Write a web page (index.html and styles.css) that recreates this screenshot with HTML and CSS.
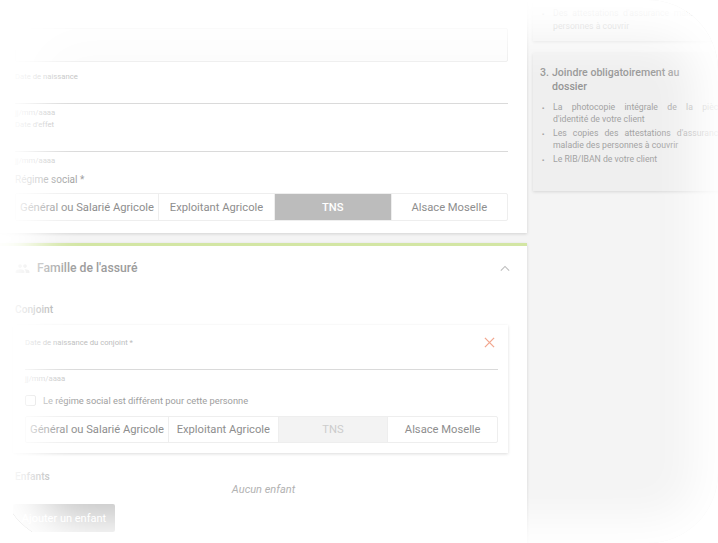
FILE: index.html
```html
<!DOCTYPE html>
<html lang="fr">
<head>
<meta charset="utf-8">
<title>Souscription</title>
<link rel="stylesheet" href="styles.css">
</head>
<body>
<div class="layout">
  <main class="main">
    <section class="card card-assure">
      <div class="top-box"></div>
      <div class="field">
        <div class="field-label">Date de naissance</div>
        <div class="field-input"></div>
        <div class="field-help">jj/mm/aaaa</div>
      </div>
      <div class="field field-next">
        <div class="field-label">Date d'effet</div>
        <div class="field-input"></div>
        <div class="field-help">jj/mm/aaaa</div>
      </div>
      <div class="group-label">Régime social *</div>
      <div class="segments">
        <div class="seg seg-first">Général ou Salarié Agricole</div>
        <div class="seg seg-second">Exploitant Agricole</div>
        <div class="seg seg-active">TNS</div>
        <div class="seg">Alsace Moselle</div>
      </div>
    </section>

    <section class="card card-famille">
      <header class="card-head">
        <svg class="ico-people" viewBox="0 0 24 24" width="15" height="15"><path fill="#cfcfcf" d="M16 11c1.66 0 2.99-1.34 2.99-3S17.66 5 16 5c-1.66 0-3 1.34-3 3s1.34 3 3 3zm-8 0c1.66 0 2.99-1.34 2.99-3S9.66 5 8 5C6.34 5 5 6.34 5 8s1.34 3 3 3zm0 2c-2.33 0-7 1.17-7 3.5V19h14v-2.5c0-2.33-4.67-3.5-7-3.5zm8 0c-.29 0-.62.02-.97.05 1.16.84 1.97 1.97 1.97 3.450V19h6v-2.5c0-2.33-4.67-3.5-7-3.5z"/></svg>
        <h2 class="card-title">Famille de l'assuré</h2>
        <svg class="ico-chevron" viewBox="0 0 12 8" width="10" height="7"><path d="M1 6.5 6 1.5l5 5" fill="none" stroke="#bdbdbd" stroke-width="1.3"/></svg>
      </header>
      <h3 class="sub">Conjoint</h3>
      <div class="inner-card">
        <div class="field field-removable">
          <div class="field-label">Date de naissance du conjoint *</div>
          <div class="field-input"></div>
          <div class="field-help">jj/mm/aaaa</div>
          <svg class="ico-close" viewBox="0 0 12 12" width="11" height="11"><path d="M1 1l10 10M11 1 1 11" stroke="#f2a68e" stroke-width="1.4" fill="none"/></svg>
        </div>
        <label class="check"><span class="box"></span>Le régime social est différent pour cette personne</label>
        <div class="segments segments-inner">
          <div class="seg seg-first">Général ou Salarié Agricole</div>
          <div class="seg">Exploitant Agricole</div>
          <div class="seg seg-disabled">TNS</div>
          <div class="seg">Alsace Moselle</div>
        </div>
      </div>
      <h3 class="sub sub-enfants">Enfants</h3>
      <p class="empty">Aucun enfant</p>
      <button class="btn">Ajouter un enfant</button>
    </section>
  </main>

  <aside class="side">
    <div class="side-card side-prev">
      <ul class="side-list">
        <li>Des attestations d'assurance maladie des personnes à couvrir</li>
      </ul>
    </div>
    <div class="side-card">
      <h4 class="side-title"><span class="num">3.</span><span>Joindre obligatoirement au dossier</span></h4>
      <ul class="side-list">
        <li>La photocopie intégrale de la pièce d'identité de votre client</li>
        <li>Les copies des attestations d'assurance maladie des personnes à couvrir</li>
        <li>Le RIB/IBAN de votre client</li>
      </ul>
    </div>
  </aside>
</div>
<div class="vignette"></div>
</body>
</html>
```

FILE: styles.css
```css
html, body {
  margin: 0;
  padding: 0;
}
body {
  width: 718px;
  height: 543px;
  overflow: hidden;
  background: #f4f4f4;
  font-family: Roboto, "Liberation Sans", sans-serif;
  color: #9a9a9a;
  position: relative;
}
.layout {
  display: grid;
  grid-template-columns: 527px 200px;
  column-gap: 6px;
  align-items: start;
}
.card {
  background: #fff;
  box-shadow: 0 1px 3px rgba(0, 0, 0, 0.14);
}
.card-assure {
  padding: 28px 19px 12px 15px;
}
.top-box {
  height: 32px;
  border: 1px solid #ededed;
  background: #fcfcfc;
  border-radius: 2px;
}
.field {
  margin-top: 10px;
  position: relative;
}
.field-next {
  margin-top: 2px;
}
.field-label {
  font-size: 7.7px;
  line-height: 10px;
  color: #bdbdbd;
}
.field-input {
  height: 21px;
  border-bottom: 1px solid #dadada;
}
.field-help {
  font-size: 7.7px;
  line-height: 10px;
  margin-top: 4px;
  color: #c4c4c4;
}
.group-label {
  margin-top: 7px;
  font-size: 10px;
  line-height: 14px;
  color: #a0a0a0;
}
.segments {
  margin-top: 6px;
  height: 28px;
  display: flex;
  border: 1px solid #eeeeee;
  box-sizing: border-box;
  border-radius: 2px;
}
.seg {
  flex: 1 1 0;
  display: flex;
  align-items: center;
  justify-content: center;
  font-size: 11.2px;
  color: #8e8e8e;
  white-space: nowrap;
  border-left: 1px solid #eeeeee;
}
.seg-first {
  flex: 0 0 142px;
  border-left: none;
}
.seg-second {
  flex: 0 0 115px;
}
.seg-active {
  background: #bcbcbc;
  color: #fff;
  font-weight: 500;
}
.card-famille {
  margin-top: 10px;
  border-top: 3px solid #d3e6a4;
  padding-bottom: 20px;
}
.card-head {
  height: 44px;
  display: flex;
  align-items: center;
  padding: 0 17px 0 15px;
  gap: 7px;
}
.card-title {
  margin: 0;
  flex: 1;
  font-size: 12.2px;
  font-weight: 500;
  color: #9c9c9c;
}
.sub {
  margin: 12px 0 0 15px;
  font-size: 10.2px;
  line-height: 16px;
  font-weight: 500;
  color: #a3a3a3;
}
.inner-card {
  margin: 7px 19px 0 13px;
  padding: 13px 10px 10px 12px;
  background: #fff;
  box-shadow: 0 1px 3px rgba(0, 0, 0, 0.14);
}
.field-removable {
  margin-top: 0;
}
.ico-close {
  position: absolute;
  right: 3px;
  top: -1px;
}
.check {
  margin-top: 9px;
  display: flex;
  align-items: center;
  gap: 7px;
  height: 14px;
  font-size: 9.3px;
  color: #9e9e9e;
}
.box {
  width: 11px;
  height: 11px;
  box-sizing: border-box;
  border: 1px solid #cfcfcf;
  border-radius: 2px;
}
.segments-inner {
  margin-top: 9px;
  height: 27px;
}
.seg-disabled {
  background: #f3f3f3;
  color: #cccccc;
}
.sub-enfants {
  margin-top: 17px;
  line-height: 14px;
}
.empty {
  margin: 0;
  text-align: center;
  font-size: 11px;
  line-height: 12px;
  font-style: italic;
  color: #acacac;
}
.btn {
  margin: 8px 0 0 13px;
  width: 102px;
  height: 28px;
  border: none;
  border-radius: 2px;
  background: #c2c2c2;
  color: #fff;
  font-family: inherit;
  font-size: 11px;
  padding: 0;
}
.side-card {
  background: #efefef;
  box-shadow: 0 1px 3px rgba(0, 0, 0, 0.12);
  padding: 13px 10px 22px 7px;
}
.side-prev {
  padding: 7px 10px 8px 7px;
  margin-bottom: 12px;
}
.side-title {
  margin: 0;
  display: flex;
  gap: 3px;
  font-size: 10.6px;
  line-height: 14px;
  font-weight: 500;
  color: #959595;
  padding-right: 20px;
}
.side-list {
  list-style: none;
  margin: 8px 0 0;
  padding: 0;
}
.side-prev .side-list {
  margin-top: 0;
}
.side-list li {
  position: relative;
  padding-left: 13px;
  font-size: 8.7px;
  line-height: 11.5px;
  text-align: justify;
  color: #a3a3a3;
  margin-bottom: 3px;
}
.side-prev .side-list li {
  line-height: 13px;
  margin-bottom: 0;
}
.side-list li::before {
  content: "▪";
  position: absolute;
  left: 2px;
  top: 0;
  font-size: 6px;
}
.vignette {
  position: absolute;
  inset: 0;
  pointer-events: none;
  border-radius: 70px;
  box-shadow: inset 8px 8px 44px 32px #fff, 0 0 0 80px #fff;
}
```
